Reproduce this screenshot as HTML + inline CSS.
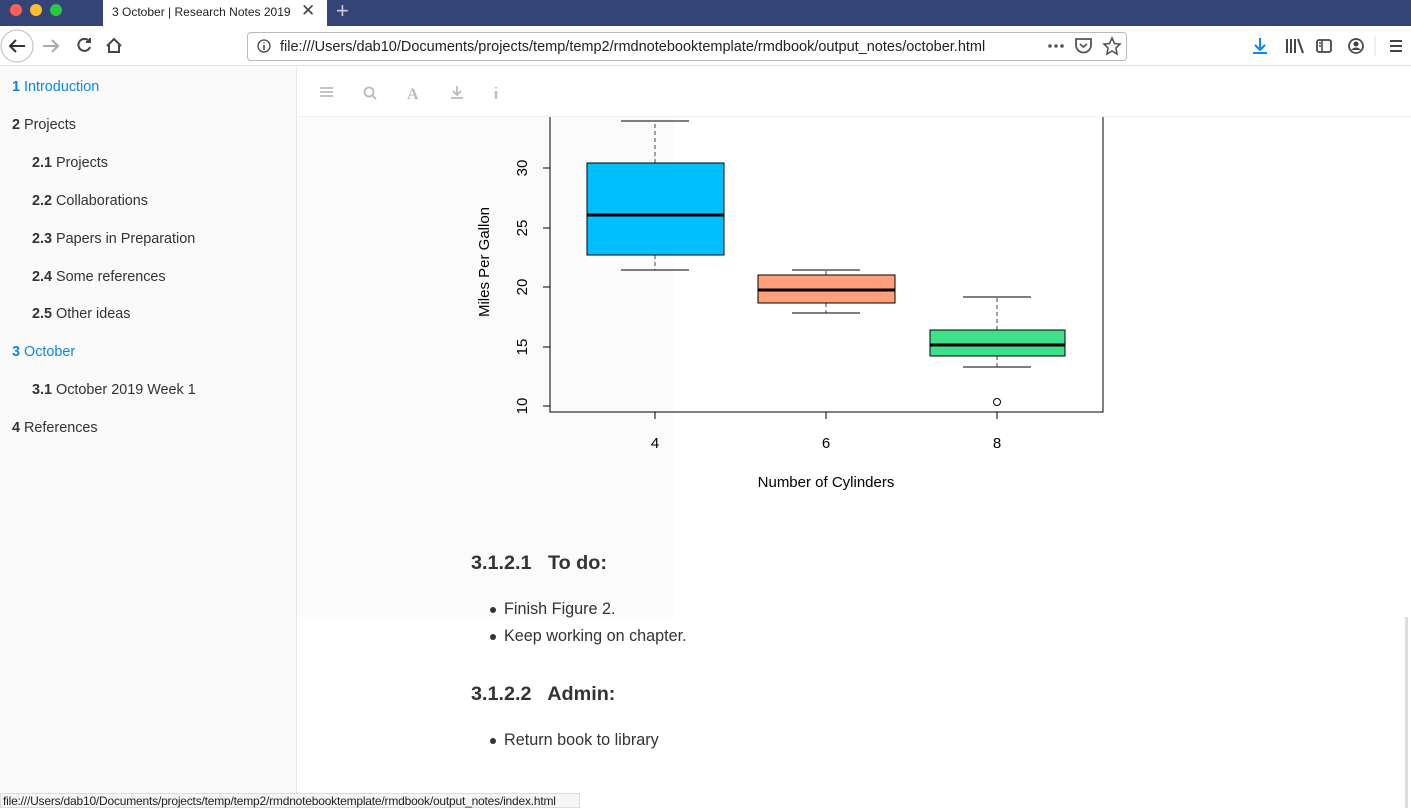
<!DOCTYPE html>
<html><head><meta charset="utf-8"><style>
*{margin:0;padding:0;box-sizing:border-box}
body{width:1411px;height:808px;overflow:hidden;font-family:"Liberation Sans",sans-serif;background:#fff;position:relative;color:#333}
.abs{position:absolute}
#title{left:0;top:0;width:1411px;height:26px;background:#354476}
.dot{width:12px;height:12px;border-radius:50%;top:4px}
#tab{left:103px;top:0;width:224px;height:26px;background:#fff;font-size:12px;color:#222;padding:5px 9px}
#nav{left:0;top:26px;width:1411px;height:40px;background:#fff;border-bottom:1px solid #ddd}
#url{left:247px;top:32px;width:880px;height:29px;border:1px solid #bbb;border-radius:4px;font-size:14.5px;color:#222;padding:6px 0 0 32px}
#side{left:0;top:67px;width:297px;height:741px;background:#fafafa;border-right:1px solid #e6e6e6}
.toc{position:absolute;font-size:14.4px;color:#333}
.toc b{font-weight:bold}
.blue{color:#0a88e8}
#bar{left:298px;top:67px;width:1113px;height:50px;background:#fff;border-bottom:1px solid #eee}
h4{position:absolute;font-size:19.8px;font-weight:bold;color:#333}
li{position:absolute;font-size:16.2px;list-style:none;color:#333}
li:before{content:"";position:absolute;left:-14px;top:7px;width:6px;height:6px;border-radius:50%;background:#333}
</style></head><body>
<div id="title" class="abs"></div>
<div class="abs dot" style="left:10px;background:#fe5f57"></div>
<div class="abs dot" style="left:30px;background:#febc2e"></div>
<div class="abs dot" style="left:50px;background:#28c840"></div>
<div id="tab" class="abs">3 October | Research Notes 2019<span style="position:absolute;left:198px;top:1px;font-size:17px;color:#444">✕</span></div>
<div class="abs" style="left:336px;top:-2px;color:#ccd;font-size:22px">+</div>
<div id="nav" class="abs"></div>
<svg class="abs" style="left:0;top:28px" width="140" height="36">
<circle cx="17" cy="18" r="16" fill="none" stroke="#bbb"/>
<path d="M25 18H10M16 12l-6 6 6 6" stroke="#333" stroke-width="2" fill="none"/>
<path d="M58 18H43M52 12l6 6-6 6" stroke="#aaa" stroke-width="2" fill="none"/>
<path d="M89 13a6 6 0 1 0 1 6M90 10v4h-4" stroke="#444" stroke-width="2" fill="none"/>
<path d="M107 18l7-7 7 7M109 17v7h10v-7" stroke="#444" stroke-width="2" fill="none"/>
</svg>
<div id="url" class="abs">file:///Users/dab10/Documents/projects/temp/temp2/rmdnotebooktemplate/rmdbook/output_notes/october.html</div>
<svg class="abs" style="left:257px;top:39px" width="14" height="14"><circle cx="7" cy="7" r="6" fill="none" stroke="#444" stroke-width="1.3"/><path d="M7 6v5M7 3.5v1" stroke="#444" stroke-width="1.5"/></svg>
<svg class="abs" style="left:1047px;top:43px" width="20" height="6"><circle cx="3" cy="3" r="1.8" fill="#555"/><circle cx="9" cy="3" r="1.8" fill="#555"/><circle cx="15" cy="3" r="1.8" fill="#555"/></svg>
<svg class="abs" style="left:1074px;top:36px" width="50" height="20"><path d="M2 3h15v6a7.5 7.5 0 0 1-15 0z" fill="none" stroke="#555" stroke-width="1.8"/><path d="M6 8l3.5 3 3.5-3" stroke="#555" stroke-width="1.8" fill="none"/><path d="M38 2l2.5 5.5 5.5.5-4 4 1 6-5-3-5 3 1-6-4-4 5.5-.5z" fill="none" stroke="#555" stroke-width="1.6"/></svg>
<svg class="abs" style="left:1250px;top:36px" width="160" height="20"><path d="M10 2v12M5 9l5 5 5-5M3 17h14" stroke="#0a84ff" stroke-width="2" fill="none"/><path d="M37 3v14M41 3v14M45 3v14M48 3l5 14" stroke="#444" stroke-width="2"/><rect x="67" y="4" width="14" height="12" rx="2" fill="none" stroke="#444" stroke-width="1.8"/><path d="M72 4v12M69 7h2M69 10h2" stroke="#444" stroke-width="1.5"/><circle cx="106" cy="10" r="7" fill="none" stroke="#444" stroke-width="1.7"/><circle cx="106" cy="8" r="2.5" fill="#444"/><path d="M101 14q5-5 10 0" fill="#444"/><path d="M125 0v20" stroke="#ddd"/><path d="M140 5h12M140 10h12M140 15h12" stroke="#444" stroke-width="2"/></svg>
<div id="side" class="abs"></div>
<div class="toc blue" style="left:12px;top:79px"><b>1</b> Introduction</div>
<div class="toc" style="left:12px;top:117px"><b>2</b> Projects</div>
<div class="toc" style="left:32px;top:155px"><b>2.1</b> Projects</div>
<div class="toc" style="left:32px;top:193px"><b>2.2</b> Collaborations</div>
<div class="toc" style="left:32px;top:231px"><b>2.3</b> Papers in Preparation</div>
<div class="toc" style="left:32px;top:269px"><b>2.4</b> Some references</div>
<div class="toc" style="left:32px;top:306px"><b>2.5</b> Other ideas</div>
<div class="toc blue" style="left:12px;top:344px"><b>3</b> October</div>
<div class="toc" style="left:32px;top:382px"><b>3.1</b> October 2019 Week 1</div>
<div class="toc" style="left:12px;top:420px"><b>4</b> References</div>
<div class="abs" style="left:298px;top:117px;width:376px;height:500px;background:#fbfbfb"></div>
<svg class="abs" style="left:0;top:0" width="1411" height="808">
<rect x="550" y="100" width="553" height="312" fill="none" stroke="#000"/>
<g stroke="#000" fill="none">
<path d="M550 406h-7M550 347h-7M550 287h-7M550 228h-7M550 168h-7M655 412v7M826 412v7M997 412v7"/>
<path d="M655 255v15M655 163v-42M826 303v10M826 275v-5M997 356v11M997 330v-33" stroke-dasharray="4 3" stroke="#444"/>
<path d="M621 121h68M621 270h68M792 270h68M792 313h68M963 297h68M963 367h68"/>
<rect x="587" y="163" width="137" height="92" fill="#00bfff"/>
<rect x="758" y="275" width="137" height="28" fill="#ffa07a"/>
<rect x="930" y="330" width="135" height="26" fill="#3ee089"/>
<path d="M587 215h137M758 290h137M930 345h135" stroke-width="3"/>
<circle cx="997" cy="402" r="3.5"/>
</g>
<g font-family="Liberation Sans" font-size="15" fill="#000" text-anchor="middle">
<text transform="translate(527 406) rotate(-90)">10</text>
<text transform="translate(527 347) rotate(-90)">15</text>
<text transform="translate(527 287) rotate(-90)">20</text>
<text transform="translate(527 228) rotate(-90)">25</text>
<text transform="translate(527 168) rotate(-90)">30</text>
<text transform="translate(489 262) rotate(-90)">Miles Per Gallon</text>
<text x="655" y="448">4</text><text x="826" y="448">6</text><text x="997" y="448">8</text>
<text x="826" y="487">Number of Cylinders</text>
</g>
</svg>
<div id="bar" class="abs"></div>
<svg class="abs" style="left:318px;top:84px" width="190" height="18" fill="none" stroke="#bbb" stroke-width="1.8">
<path d="M2 4h13M2 8h13M2 12h13"/><circle cx="51" cy="8" r="4.5"/><path d="M54 11l4 4"/>
<text x="89" y="15" fill="#bbb" stroke="none" font-family="Liberation Serif" font-size="16" font-weight="bold">A</text>
<path d="M139 2v8M135 7l4 4 4-4M133 14h12"/><path d="M178 7v8M178 3v1.5" stroke-width="2.2"/>
</svg>
<h4 style="left:471px;top:552px">3.1.2.1&nbsp;&nbsp; To do:</h4>
<li style="left:504px;top:600px">Finish Figure 2.</li>
<li style="left:504px;top:627px">Keep working on chapter.</li>
<h4 style="left:471px;top:683px">3.1.2.2&nbsp;&nbsp; Admin:</h4>
<li style="left:504px;top:731px">Return book to library</li>
<div class="abs" style="left:1405px;top:617px;width:3px;height:191px;background:#ddd"></div>
<div class="abs" style="left:0;top:793px;width:580px;height:15px;background:#f6f6f6;border:1px solid #ddd;font-size:12px;color:#222;padding:0 2px;white-space:nowrap;letter-spacing:-0.2px">file:///Users/dab10/Documents/projects/temp/temp2/rmdnotebooktemplate/rmdbook/output_notes/index.html</div>
</body></html>
